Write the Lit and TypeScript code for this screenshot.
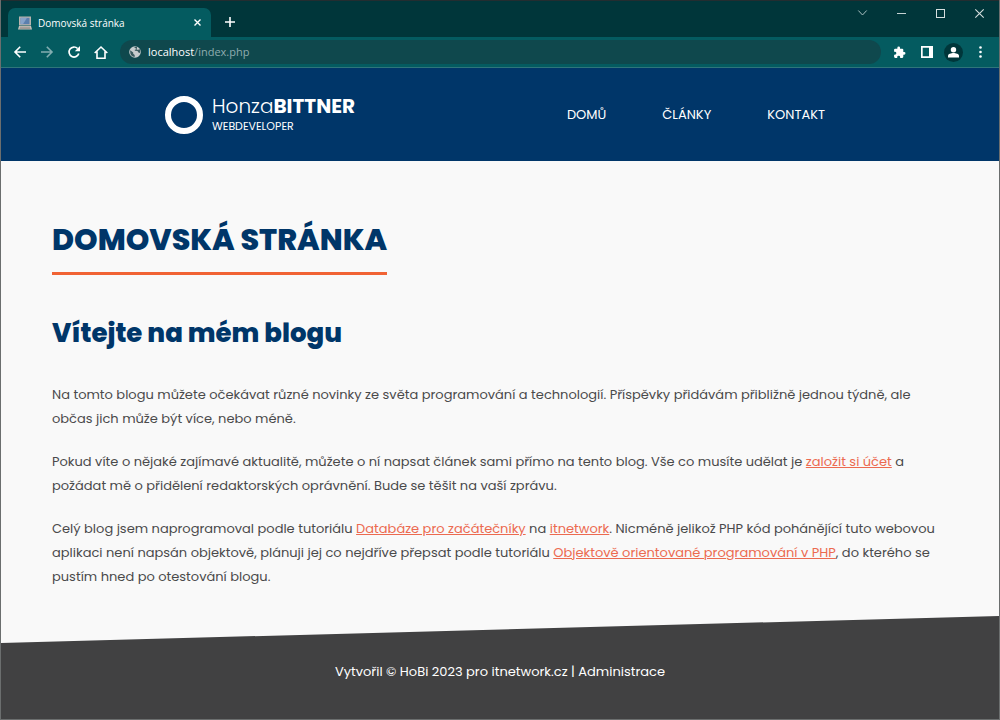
import { LitElement, html, css } from "lit";
import { customElement } from "lit/decorators.js";

@customElement("browser-chrome")
class BrowserChrome extends LitElement {
  static styles = css`
    :host {
      display: block;
      color: #fff;
      font-family: "Open Sans", "Noto Sans", sans-serif;
      font-size: 11px;
    }
    .titlebar {
      display: flex;
      align-items: flex-end;
      height: 36px;
      padding-left: 7px;
      background: #00363a;
      border-top: 1px solid #232d30;
    }
    .tab {
      display: flex;
      align-items: center;
      width: 203px;
      height: 29px;
      padding: 0 8px 0 10px;
      box-sizing: border-box;
      border-radius: 7px 7px 0 0;
      background: #045b60;
    }
    .tab-title {
      flex: 1;
      margin-left: 6px;
      font-size: 10px;
      white-space: nowrap;
    }
    button {
      display: flex;
      align-items: center;
      justify-content: center;
      padding: 0;
      border: 0;
      background: none;
      color: inherit;
    }
    svg {
      display: block;
      overflow: visible;
    }
    .close {
      width: 12px;
      height: 12px;
    }
    .new-tab {
      width: 38px;
      height: 30px;
    }
    .window-buttons {
      display: flex;
      align-self: flex-start;
      margin-left: auto;
    }
    .window-buttons button {
      width: 39px;
      height: 24px;
    }
    .toolbar {
      display: flex;
      align-items: center;
      height: 30px;
      padding: 0 5px;
      background: #045b60;
      border-bottom: 1px solid #2f757a;
    }
    .toolbar button {
      width: 27px;
      height: 28px;
    }
    .dim {
      opacity: 0.5;
    }
    .address {
      display: flex;
      align-items: center;
      flex: 1;
      height: 24px;
      margin: 0 5px 0 6px;
      padding-left: 9px;
      border-radius: 12px;
      background: #0f484d;
    }
    .url {
      margin-left: 7px;
      color: #8fadaf;
    }
    .host {
      color: #fff;
    }
    .avatar {
      border-radius: 50%;
      background: #00363a;
    }
  `;

  render() {
    return html`
      <div class="titlebar">
        <div class="tab">
          <svg width="14" height="14" viewBox="0 0 14 14">
            <rect x="1" y="0.5" width="12" height="9" fill="#b9b4ae" />
            <rect x="2.5" y="1.8" width="9" height="6.4" fill="#5b7fae" />
            <path d="M2.5 1.8H9L5 8.2H2.5z" fill="#86a3c8" />
            <path d="M1 10h12l1 3.5H0z" fill="#c9c2bb" />
            <path d="M2 11.2h10M1.6 12.4h10.8" stroke="#85817d" stroke-width="0.7" />
          </svg>
          <span class="tab-title">Domovská stránka</span>
          <button class="close" aria-label="Zavřít kartu">
            <svg width="7" height="7" viewBox="0 0 7 7">
              <path d="M0.5 0.5l6 6M6.5 0.5l-6 6" stroke="#fff" stroke-width="1.4" />
            </svg>
          </button>
        </div>
        <button class="new-tab" aria-label="Nová karta">
          <svg width="10" height="10" viewBox="0 0 10 10">
            <path d="M5 0v10M0 5h10" stroke="#fff" stroke-width="1.6" />
          </svg>
        </button>
        <div class="window-buttons">
          <button aria-label="Hledat karty">
            <svg width="9" height="6" viewBox="0 0 9 6" fill="none" stroke="#a9bfc0">
              <path d="M0.3 0.5l4.2 4.5 4.2-4.5" />
            </svg>
          </button>
          <button aria-label="Minimalizovat">
            <svg width="9" height="3" viewBox="0 0 9 3"><path d="M0 1.5h9" stroke="#c5d2d3" /></svg>
          </button>
          <button aria-label="Maximalizovat">
            <svg width="9" height="9" viewBox="0 0 9 9" fill="none" stroke="#d5dfdf">
              <rect x="0.5" y="0.5" width="8" height="8" />
            </svg>
          </button>
          <button aria-label="Zavřít">
            <svg width="9" height="9" viewBox="0 0 9 9" stroke="#d5dfdf" stroke-width="1.1">
              <path d="M0.3 0.3l8.4 8.4M8.7 0.3l-8.4 8.4" />
            </svg>
          </button>
        </div>
      </div>
      <div class="toolbar">
        <button aria-label="Zpět">
          <svg width="12" height="12" viewBox="0 0 12 12" fill="none" stroke="#fff" stroke-width="1.6">
            <path d="M12 6H1.2M6.2 0.8L1 6l5.2 5.2" />
          </svg>
        </button>
        <button class="dim" aria-label="Vpřed">
          <svg width="12" height="12" viewBox="0 0 12 12" fill="none" stroke="#fff" stroke-width="1.6">
            <path d="M0 6h10.8M5.8 0.8L11 6l-5.2 5.2" />
          </svg>
        </button>
        <button aria-label="Obnovit">
          <svg width="12" height="12" viewBox="0 0 12 12">
            <path d="M10.8 7.6A5 5 0 1 1 9.6 2.5" fill="none" stroke="#fff" stroke-width="1.7" />
            <path d="M12 0v5.2H6.8z" fill="#fff" />
          </svg>
        </button>
        <button aria-label="Domů">
          <svg width="14" height="13" viewBox="0 0 14 13" fill="none" stroke="#fff" stroke-width="1.6">
            <path d="M0.7 7L7 1l6.3 6M3 5.6v6.6h8V5.6" />
          </svg>
        </button>
        <div class="address">
          <svg width="12" height="12" viewBox="0 0 12 12">
            <circle cx="6" cy="6" r="5.8" fill="#c7cccd" />
            <path d="M1.2 4.3l3 2.2v1.2l1.5 1.2v2C3 10.7 1.2 8.7 1.2 6z" fill="#3a5a5e" />
            <path d="M5 1l3-0.2v1.7l-1.2 1-1 0.2v1l2.7 0.3 0.9 1.5 1.4 0.6c0.6-1.3 0.5-3-0.4-4.2L9 4 8 3.5" fill="#3a5a5e" />
          </svg>
          <span class="url"><span class="host">localhost</span>/index.php</span>
        </div>
        <button aria-label="Rozšíření">
          <svg width="13" height="13" viewBox="0 0 24 24" fill="#fff">
            <path d="M20.5 11H19V7a2 2 0 0 0-2-2h-4V3.5a2.5 2.5 0 0 0-5 0V5H4a2 2 0 0 0-2 2v3.8h1.5a2.7 2.7 0 0 1 0 5.4H2V20a2 2 0 0 0 2 2h3.8v-1.5a2.7 2.7 0 0 1 5.4 0V22H17a2 2 0 0 0 2-2v-4h1.5a2.5 2.5 0 0 0 0-5z" />
          </svg>
        </button>
        <button aria-label="Postranní panel">
          <svg width="12" height="12" viewBox="0 0 12 12">
            <path d="M0 0h12v12H0zM1.7 1.7v8.6H8V1.7z" fill="#fff" fill-rule="evenodd" />
          </svg>
        </button>
        <button aria-label="Profil">
          <svg class="avatar" width="19" height="19" viewBox="0 0 19 19" fill="#fff">
            <circle cx="9.5" cy="6.7" r="2.7" />
            <path d="M4 14.5v-1.5c0-2 3.2-2.9 5.5-2.9s5.5 0.9 5.5 2.9v1.5z" />
          </svg>
        </button>
        <button aria-label="Nabídka">
          <svg width="3" height="12" viewBox="0 0 3 12" fill="#fff">
            <circle cx="1.5" cy="1.5" r="1.3" />
            <circle cx="1.5" cy="6" r="1.3" />
            <circle cx="1.5" cy="10.5" r="1.3" />
          </svg>
        </button>
      </div>
    `;
  }
}

@customElement("app-root")
class AppRoot extends LitElement {
  static styles = css`
    :host {
      display: flex;
      flex-direction: column;
      box-sizing: border-box;
      min-height: 100vh;
      border: solid #6b6e6e;
      border-width: 0 1px 1px;
      background: #f9f9f9;
      color: #4a4a4b;
      font-family: Poppins, Inter, "Open Sans", sans-serif;
      font-size: 13px;
      line-height: 24px;
    }
    a {
      color: inherit;
      text-decoration: none;
    }
    header {
      display: flex;
      align-items: center;
      justify-content: space-between;
      height: 93px;
      padding: 0 174px 0 164px;
      background: #003669;
      color: #fff;
    }
    .logo {
      display: flex;
      align-items: center;
      gap: 9px;
    }
    .ring {
      width: 26px;
      height: 26px;
      border: 6px solid #fff;
      border-radius: 50%;
    }
    .name {
      display: block;
      font-size: 20px;
      font-weight: 300;
      line-height: 22px;
    }
    .name b {
      font-weight: 700;
    }
    .role {
      display: block;
      font-size: 11px;
      line-height: 18px;
    }
    nav {
      display: flex;
      gap: 56px;
    }
    main {
      padding: 54px 51px 8px;
    }
    h1 {
      width: fit-content;
      margin: 0 0 38px;
      padding-bottom: 8px;
      border-bottom: 3px solid #f16334;
      color: #003669;
      font-size: 30px;
      font-weight: 800;
      line-height: 49px;
    }
    h2 {
      margin: 0 0 30px;
      color: #003669;
      font-size: 26px;
      font-weight: 800;
      line-height: 40px;
    }
    p {
      margin: 0 0 19px;
    }
    p a {
      color: #ec6a50;
      text-decoration: underline;
    }
    footer {
      flex: 1;
      display: flex;
      justify-content: center;
      padding-top: 44px;
      background: #414142;
      clip-path: polygon(0 27px, 100% 0, 100% 100%, 0 100%);
      color: #fff;
    }
  `;

  render() {
    return html`
      <browser-chrome></browser-chrome>
      <header>
        <a class="logo" href="#">
          <span class="ring"></span>
          <span>
            <span class="name">Honza<b>BITTNER</b></span>
            <span class="role">WEBDEVELOPER</span>
          </span>
        </a>
        <nav>
          <a href="#">DOMŮ</a>
          <a href="#">ČLÁNKY</a>
          <a href="#">KONTAKT</a>
        </nav>
      </header>
      <main>
        <h1>DOMOVSKÁ STRÁNKA</h1>
        <h2>Vítejte na mém blogu</h2>
        <p>
          Na tomto blogu můžete očekávat různé novinky ze světa programování a technologií. Příspěvky
          přidávám přibližně jednou týdně, ale občas jich může být více, nebo méně.
        </p>
        <p>
          Pokud víte o nějaké zajímavé aktualitě, můžete o ní napsat článek sami přímo na tento blog.
          Vše co musíte udělat je <a href="#">založit si účet</a> a požádat mě o přidělení
          redaktorských oprávnění. Bude se těšit na vaší zprávu.
        </p>
        <p>
          Celý blog jsem naprogramoval podle tutoriálu <a href="#">Databáze pro začátečníky</a> na
          <a href="#">itnetwork</a>. Nicméně jelikož PHP kód pohánějící tuto webovou aplikaci není
          napsán objektově, plánuji jej co nejdříve přepsat podle tutoriálu
          <a href="#">Objektově orientované programování v PHP</a>, do kterého se pustím hned po
          otestování blogu.
        </p>
      </main>
      <footer>
        <span>Vytvořil © HoBi 2023 pro itnetwork.cz | <a href="#">Administrace</a></span>
      </footer>
    `;
  }
}
